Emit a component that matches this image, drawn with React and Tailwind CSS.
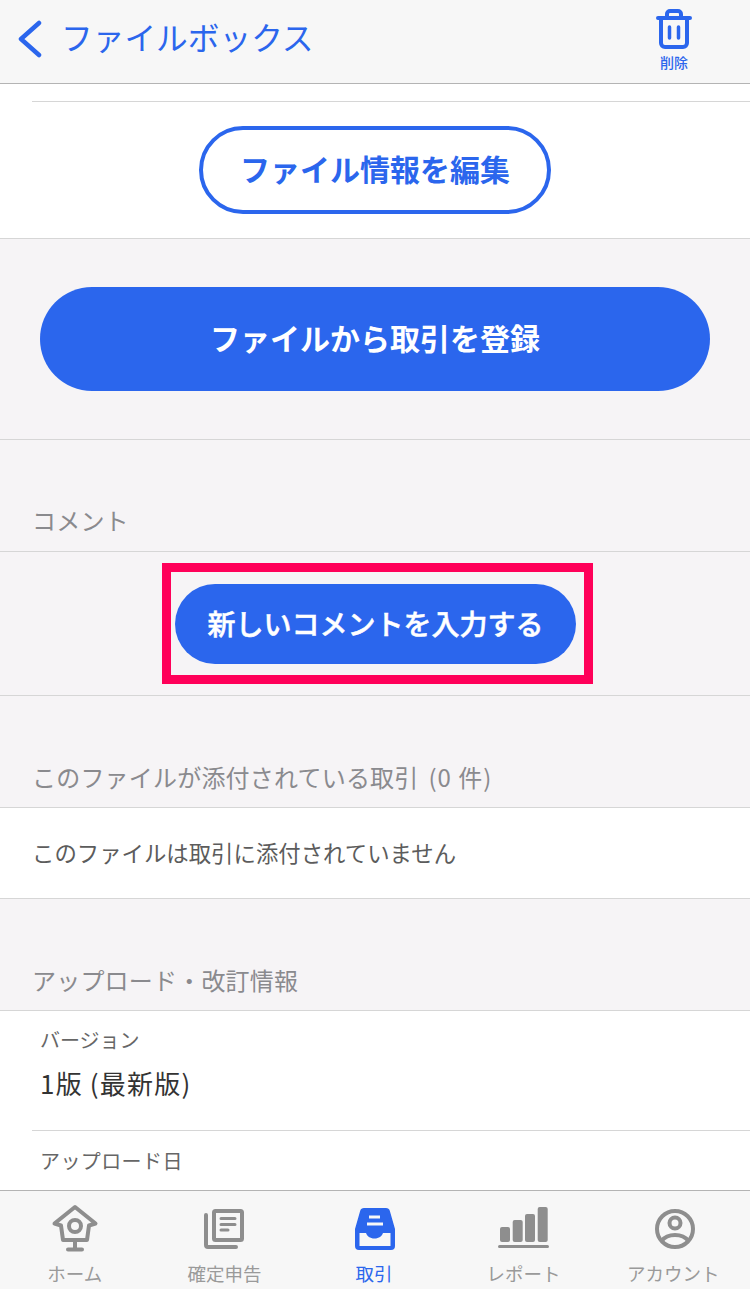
const font = "font-['Noto_Sans_CJK_JP','Noto_Sans',sans-serif]";

const SectionLabel = ({ children, className = '' }) => (
  <div className={`px-[32px] text-[24px] leading-[32px] tracking-[0.2px] text-[#8a8a8e] ${className}`}>{children}</div>
);

const HomeIcon = () => (
  <svg width="48" height="48" viewBox="0 0 48 48" fill="none" stroke="#8e8e8e" strokeWidth="4" strokeLinejoin="round" strokeLinecap="round">
    <path d="M3.500 19.500 24 3 44.500 19.500 38 21.500 36 36H12L10 21.500Z" />
    <circle cx="24" cy="22" r="6" />
    <path d="M24 36v9.500M17 45.500h14" />
  </svg>
);

const FilingIcon = () => (
  <svg width="40" height="40" viewBox="0 0 40 40" fill="none" stroke="#8e8e8e" strokeWidth="4" strokeLinecap="round" strokeLinejoin="round" className="mb-[3px]">
    <rect x="10" y="2" width="28" height="29" rx="1.500" />
    <path d="M17 9.500h14M17 15.500h14M17 21h7" strokeWidth="3" />
    <path d="M2 6v30a2 2 0 0 0 2 2h28" />
  </svg>
);

const TrayIcon = () => (
  <svg width="42" height="44" viewBox="0 0 42 44" className="mb-[1px] ml-[3px]">
    <path fill="#2b66ed" fillRule="evenodd" d="M10 1h22a4 4 0 0 1 3.800 2.800L41 22v17a4 4 0 0 1-4 4H5a4 4 0 0 1-4-4V22L6.200 3.800A4 4 0 0 1 10 1ZM15 8.500v3h11v-3ZM13 15.500v3h16v-3ZM5.500 26v13h31V26H29c-1 3-4 5.500-8.500 5.500S13 29 12 26Z" />
  </svg>
);

const ReportIcon = () => (
  <svg width="51" height="41" viewBox="0 0 51 41" fill="#8e8e8e" className="mb-[4px]">
    <rect x="2" y="20" width="10" height="15" rx="2" />
    <rect x="14.700" y="13" width="10" height="22" rx="2" />
    <rect x="27" y="7" width="10" height="28" rx="2" />
    <rect x="39.700" y="0" width="10" height="35" rx="2" />
    <rect x="0" y="38" width="51" height="3" rx="1.500" />
  </svg>
);

const AccountIcon = () => (
  <svg width="40" height="40" viewBox="0 0 40 40" fill="none" stroke="#8e8e8e" strokeWidth="4" className="mb-[3px] ml-[3px]">
    <circle cx="20" cy="20" r="18" />
    <circle cx="20" cy="14" r="5.500" />
    <path d="M6.500 32c3-4 8-6 13.500-6s10.500 2 13.500 6" />
  </svg>
);

const tabs = [
  { label: 'ホーム', icon: <HomeIcon /> },
  { label: '確定申告', icon: <FilingIcon /> },
  { label: '取引', icon: <TrayIcon />, active: true },
  { label: 'レポート', icon: <ReportIcon /> },
  { label: 'アカウント', icon: <AccountIcon /> },
];

export default function App() {
  return (
    <div className={`flex h-[1289px] w-[750px] flex-col overflow-hidden bg-white ${font}`}>
      {/* ヘッダー */}
      <header className="flex h-[84px] shrink-0 items-start border-b border-[#b4b4b4] bg-[#f7f7f7] pl-[18px] pr-[58px]">
        <svg width="24" height="38" viewBox="0 0 24 38" fill="none" stroke="#2b66ed" strokeWidth="4.500" strokeLinecap="round" strokeLinejoin="round" className="mt-[20px]">
          <path d="M21 3 3 19l18 16" />
        </svg>
        <span className="ml-[19px] mt-[14px] flex-1 text-[31.700px] leading-[44px] text-[#2b66ed]">ファイルボックス</span>
        <div className="flex w-[36px] flex-col items-center pt-[8px]">
          <svg width="36" height="42" viewBox="0 0 36 42" fill="none" stroke="#2b66ed" strokeWidth="4" strokeLinecap="round" strokeLinejoin="round">
            <path d="M2 10h32M11 9V6a3 3 0 0 1 3-3h8a3 3 0 0 1 3 3v3" />
            <path d="M5 10v25a4 4 0 0 0 4 4h18a4 4 0 0 0 4-4V10" />
            <path d="M13.500 19v11M22.500 19v11" strokeWidth="3.500" />
          </svg>
          <span className="mt-[2px] whitespace-nowrap text-[14px] font-medium leading-[20px] text-[#2b66ed]">削除</span>
        </div>
      </header>

      <main className="flex min-h-0 flex-1 flex-col overflow-hidden bg-[#f6f4f6]">
        {/* ファイル情報 */}
        <section className="h-[155px] shrink-0 border-b border-[#d6d6d6] bg-white pt-[17px]">
          <div className="ml-[32px] border-t border-[#d6d6d6]" />
          <div className="mt-[24px] flex justify-center">
            <button className="flex h-[88px] w-[352px] items-center justify-center rounded-[44px] border-[4px] border-[#2b66ed] pb-[4px] text-[30px] font-semibold text-[#2b66ed]">
              ファイル情報を編集
            </button>
          </div>
        </section>

        <section className="flex h-[201px] shrink-0 items-center justify-center border-b border-[#d6d6d6]">
          <button className="flex h-[104px] w-[670px] items-center justify-center rounded-[52px] bg-[#2b66ed] pb-[3px] text-[30px] font-semibold text-white">
            ファイルから取引を登録
          </button>
        </section>

        {/* コメント */}
        <SectionLabel className="mt-[64px] mb-[15px]">コメント</SectionLabel>
        <section className="h-[145px] shrink-0 border-y border-[#d6d6d6] pl-[162px] pt-[11px]">
          <div className="h-[121px] w-[431px] border-[9px] border-[#ff0059] pl-[4px] pt-[12px]">
            <button className="flex h-[80px] w-[401px] items-center justify-center rounded-[40px] bg-[#2b66ed] pb-[2px] text-[28px] font-medium text-white [-webkit-text-stroke:0.5px_white]">
              新しいコメントを入力する
            </button>
          </div>
        </section>

        {/* 添付取引 */}
        <SectionLabel className="mt-[65px] mb-[14px]">
          このファイルが添付されている取引<span className="ml-[10px] tracking-[1px]">(0 件)</span>
        </SectionLabel>
        <section className="flex h-[92px] shrink-0 items-center border-y border-[#d6d6d6] bg-white px-[32px] pb-[1px] text-[22.400px] text-[#5c5c5c]">
          このファイルは取引に添付されていません
        </section>

        {/* 改訂情報 */}
        <SectionLabel className="mt-[65px] mb-[14px]">アップロード・改訂情報</SectionLabel>
        <section className="flex-1 border-t border-[#d6d6d6] bg-white">
          <div className="ml-[32px] h-[120px] border-b border-[#d6d6d6] pl-[8px] pt-[15px]">
            <div className="text-[20px] leading-[28px] text-[#666666]">バージョン</div>
            <div className="mt-[13px] text-[26px] leading-[32px] tracking-[1.200px] text-[#333333]">1版 (最新版)</div>
          </div>
          <div className="pl-[40px] pt-[16px] text-[20px] leading-[28px] tracking-[0.4px] text-[#666666]">アップロード日</div>
        </section>
      </main>

      {/* タブバー */}
      <nav className="grid h-[99px] shrink-0 grid-cols-5 border-t border-[#b4b4b4] bg-[#f7f7f7] pr-[2px]">
        {tabs.map((tab) => (
          <div key={tab.label} className="flex flex-col items-center">
            <div className="flex h-[62px] items-end justify-center pb-[1px]">{tab.icon}</div>
            <span className={`mt-[6px] text-[18.500px] leading-[28px] ${tab.active ? 'text-[#2b66ed]' : 'text-[#9a9a9a]'}`}>
              {tab.label}
            </span>
          </div>
        ))}
      </nav>
    </div>
  );
}
